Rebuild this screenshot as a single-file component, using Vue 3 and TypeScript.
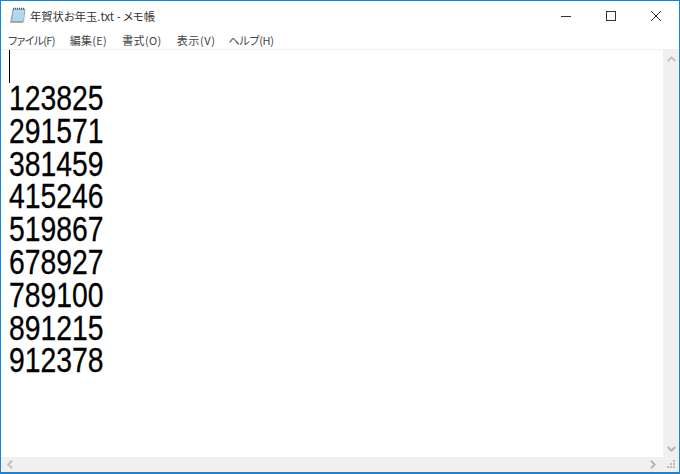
<script setup lang="ts">
const numbers: string[] = ['123825','291571','381459','415246','519867','678927','789100','891215','912378']
const menus: string[] = ['ファイル(F)','編集(E)','書式(O)','表示(V)','ヘルプ(H)']
</script>

<template>
  <div class="win">
    <header class="title">
      <svg class="app" width="17" height="17" viewBox="0 0 17 17">
        <path d="M3.5 3 H15.5 L14 16 H1 Z" fill="#c4b083" />
        <path d="M4 2 H16 L14.6 14.5 H2.5 Z" fill="#a6d2ea" stroke="#7c9db0" stroke-width=".8" />
        <path d="M5 4 H15 L14 13.5 H3.6 Z" fill="#c3e2f2" />
        <path d="M4.6 6 H14.6 M4.4 8 H14.3 M4.2 10 H14.1 M4 12 H13.9" stroke="#93c3dc" stroke-width=".7" />
        <path d="M4 1.6 H16" stroke="#4f5a63" stroke-width="1.8" stroke-dasharray="1 1" />
      </svg>
      <span class="caption">年賀状お年玉.txt - メモ帳</span>
      <div class="controls">
        <span class="ctl">
          <svg width="10" height="10" viewBox="0 0 10 10"><path d="M0 5.5 H10" stroke="#333" /></svg>
        </span>
        <span class="ctl">
          <svg width="10" height="10" viewBox="0 0 10 10"><rect x=".5" y=".5" width="9" height="9" fill="none" stroke="#333" /></svg>
        </span>
        <span class="ctl">
          <svg width="10" height="10" viewBox="0 0 10 10"><path d="M0 0 L10 10 M10 0 L0 10" stroke="#333" /></svg>
        </span>
      </div>
    </header>
    <nav class="menu">
      <span v-for="m in menus" :key="m" class="item">{{ m }}</span>
    </nav>
    <div class="body">
      <main class="edit">
        <div class="caret"></div>
        <div class="lines">
          <div v-for="n in numbers" :key="n" class="line">{{ n }}</div>
        </div>
      </main>
      <aside class="vbar">
        <svg width="9" height="6" viewBox="0 0 9 6"><path d="M.8 5 L4.5 1.3 L8.2 5" fill="none" stroke="#c4c4c4" stroke-width="2" /></svg>
        <svg width="9" height="6" viewBox="0 0 9 6"><path d="M.8 1 L4.5 4.7 L8.2 1" fill="none" stroke="#b4b4b4" stroke-width="2" /></svg>
      </aside>
    </div>
    <footer class="hbar">
      <svg width="6" height="9" viewBox="0 0 6 9"><path d="M5 .8 L1.3 4.5 L5 8.2" fill="none" stroke="#c0c0c0" stroke-width="2" /></svg>
      <svg width="6" height="9" viewBox="0 0 6 9"><path d="M1 .8 L4.7 4.5 L1 8.2" fill="none" stroke="#b4b4b4" stroke-width="2" /></svg>
      <svg class="grip" width="17" height="15" viewBox="0 0 17 15">
        <path d="M11 3h2v2h-2z M11 6h2v2h-2z M8 6h2v2H8z M11 9h2v2h-2z M8 9h2v2H8z M5 9h2v2H5z" fill="#b9b9b9" />
      </svg>
    </footer>
  </div>
</template>

<style>
html, body { margin: 0; background: #fff; }
</style>

<style scoped>
.win {
  width: 680px;
  height: 474px;
  box-sizing: border-box;
  border: solid #1883d7;
  border-width: 1px 1px 2px 1px;
  display: flex;
  flex-direction: column;
  background: #fff;
  font-family: "Noto Sans CJK JP", "Liberation Sans", sans-serif;
  font-feature-settings: "palt";
  overflow: hidden;
}
.title {
  height: 29px;
  flex: none;
  display: flex;
  align-items: center;
  padding-left: 8px;
}
.app { flex: none; margin-right: 4px; }
.caption { font-size: 11.3px; color: #333; }
.controls { margin-left: auto; display: flex; padding-right: 1px; }
.ctl {
  width: 45px;
  height: 29px;
  display: flex;
  align-items: center;
  justify-content: center;
}
.menu {
  height: 20px;
  flex: none;
  display: flex;
  align-items: center;
  gap: 15px;
  padding-left: 7px;
  box-sizing: border-box;
  border-bottom: 1px solid #f0f0f0;
}
.item { font-size: 11px; color: #444; }
.item:nth-child(1) { letter-spacing: -0.7px; }
.item:nth-child(2) { letter-spacing: 0.3px; }
.item:nth-child(3) { letter-spacing: 0.4px; }
.item:nth-child(4) { letter-spacing: 0.6px; margin-right: -2px; }
.item:nth-child(5) { letter-spacing: -0.3px; }
.body { flex: 1; display: flex; min-height: 0; }
.edit { flex: 1; min-width: 0; padding-left: 8px; overflow: hidden; }
.caret { width: 1px; height: 33px; background: #000; }
.lines {
  margin-top: -1px;
  transform: scaleX(0.81);
  transform-origin: left top;
  font-family: "Liberation Sans", sans-serif;
  font-size: 35px;
  line-height: 32.8px;
  color: #000;
  -webkit-text-stroke: 0.3px #000;
  white-space: nowrap;
}
.line { height: 32.8px; }
.vbar {
  width: 16px;
  flex: none;
  background: #f0f0f0;
  display: flex;
  flex-direction: column;
  align-items: center;
  justify-content: space-between;
  padding: 6px 0 5px;
  box-sizing: border-box;
}
.hbar {
  position: relative;
  height: 15px;
  flex: none;
  background: #f0f0f0;
  display: flex;
  align-items: center;
  justify-content: space-between;
  padding: 0 23px 0 6px;
}
.grip { position: absolute; right: 0; top: 0; }
</style>
